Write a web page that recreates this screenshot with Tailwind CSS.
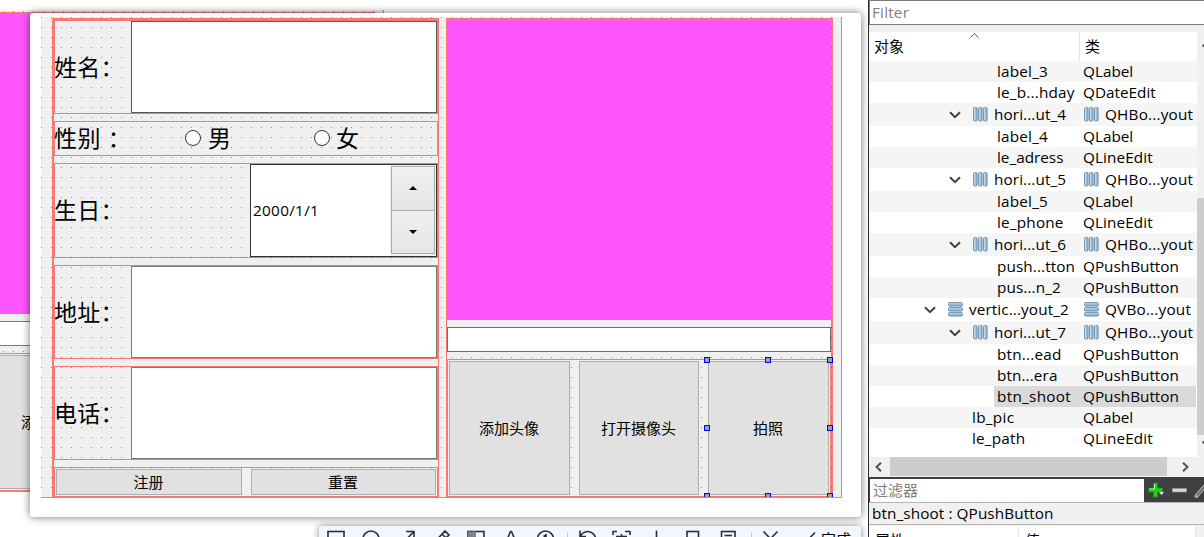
<!DOCTYPE html>
<html lang="zh-CN">
<head>
    <meta charset="UTF-8">
    <meta name="viewport" content="width=device-width, initial-scale=1.0">
    <title>Form Designer</title>
    <script src="https://cdn.jsdelivr.net/npm/@tailwindcss/browser@4"></script>
</head>
<body class="bg-white text-black font-['Open_Sans','Noto_Sans_CJK_SC',sans-serif]">
    <!-- shared icons -->
    <svg class="absolute w-0 h-0">
        <defs>
            <linearGradient id="barH" x1="0" y1="0" x2="1" y2="0">
                <stop offset="0" stop-color="#d6ecfa"/><stop offset="1" stop-color="#6fa3cc"/>
            </linearGradient>
            <linearGradient id="barV" x1="0" y1="0" x2="0" y2="1">
                <stop offset="0" stop-color="#b8e0f8"/><stop offset="1" stop-color="#6fa3cc"/>
            </linearGradient>
        </defs>
        <symbol id="hbox" viewBox="0 0 15 15">
            <g fill="url(#barH)" stroke="#8296aa" stroke-width="1">
                <rect x="0.5" y="0.5" width="3.6" height="13.5" rx="1"/>
                <rect x="5.5" y="0.5" width="3.6" height="13.5" rx="1"/>
                <rect x="10.5" y="0.5" width="3.6" height="13.5" rx="1"/>
            </g>
        </symbol>
        <symbol id="vbox" viewBox="0 0 15 15">
            <g fill="url(#barV)" stroke="#8296aa" stroke-width="1">
                <rect x="0.5" y="0.5" width="14" height="3.6" rx="1"/>
                <rect x="0.5" y="5.5" width="14" height="3.6" rx="1"/>
                <rect x="0.5" y="10.5" width="14" height="3.6" rx="1"/>
            </g>
        </symbol>
        <symbol id="chev" viewBox="0 0 12 8">
            <path d="M1 1.2 L6 6.2 L11 1.2" fill="none" stroke="#404040" stroke-width="2"/>
        </symbol>
    </svg>

    <div class="relative w-[1204px] h-[537px] overflow-hidden flex">
        <!-- designer behind the pinned window -->
        <div class="w-[868px] h-[537px] pt-[10px]">
            <div class="w-[384px] h-[482px] border-r border-b border-[#a0a0a0] bg-[#f0f0f0] bg-[radial-gradient(circle_at_3.5px_1.5px,#8c8c8c_0.6px,transparent_0.6px)] bg-[length:10px_10px] flex flex-col">
                <div class="mt-[2px] w-[375px] border-t border-[#ff0000]/50 grow flex flex-col">
                    <div class="h-[301px] bg-[#ff55ff]"></div>
                    <div class="mt-[7px] h-[25px] bg-white border-y border-[#7a7a7a]"></div>
                    <div class="mt-[7px] h-[138px] border-y border-[#ff0000]/50 bg-[#f0f0f0] py-px">
                        <div class="h-full bg-[#e1e1e1] border-y border-[#adadad] flex items-center pl-[21px] text-[15px]">添</div>
                    </div>
                </div>
            </div>
        </div>

        <!-- object inspector -->
        <div class="w-[336px] h-[537px] shrink-0 border-l border-[#2d2d2d] bg-[#f0f0f0] flex flex-col text-[15.3px] leading-none whitespace-nowrap">
            <div class="h-[25px] shrink-0 border-y border-l border-[#7a7a7a] bg-white text-[#808080] flex items-center pl-[2px] tracking-[0.2px]">Filter</div>
            <div class="mt-[7px] h-[425px] shrink-0 flex">
                <div class="w-[328px] bg-white flex flex-col">
                    <div class="h-[29px] flex items-center text-[15px]">
                        <div class="relative w-[210px] pl-[5px]">对象
                            <svg class="absolute left-[101px] -top-[6px] w-[9px] h-[5px]" viewBox="0 0 9 5"><path d="M0.5 4.5 L4.5 0.7 L8.5 4.5" fill="none" stroke="#555" stroke-width="1"/></svg>
                        </div>
                        <div class="h-full border-l border-[#e5e5e5] pl-[5px] flex items-center">类</div>
                    </div>
                    <div class="h-[21px] flex items-center bg-[#f5f5f5]"><span class="w-[214px] pl-[128px] tracking-[0.2px]">label_3</span><span>QLabel</span></div>
                    <div class="h-[21px] flex items-center"><span class="w-[214px] pl-[128px] tracking-[0.2px]">le_b...hday</span><span>QDateEdit</span></div>
                    <div class="h-[23px] flex items-center bg-[#f5f5f5]"><svg class="ml-[80px] w-3 h-2"><use href="#chev"/></svg><svg class="ml-[12px] w-[15px] h-[15px]"><use href="#hbox"/></svg><span class="w-[95px] pl-[6px] tracking-[0.1px]">hori...ut_4</span><svg class="ml-px w-[15px] h-[15px]"><use href="#hbox"/></svg><span class="pl-[6px] tracking-[0.2px]">QHBo...yout</span></div>
                    <div class="h-[21px] flex items-center"><span class="w-[214px] pl-[128px] tracking-[0.2px]">label_4</span><span>QLabel</span></div>
                    <div class="h-[21px] flex items-center bg-[#f5f5f5]"><span class="w-[214px] pl-[128px]">le_adress</span><span class="tracking-[0.1px]">QLineEdit</span></div>
                    <div class="h-[23px] flex items-center"><svg class="ml-[80px] w-3 h-2"><use href="#chev"/></svg><svg class="ml-[12px] w-[15px] h-[15px]"><use href="#hbox"/></svg><span class="w-[95px] pl-[6px] tracking-[0.1px]">hori...ut_5</span><svg class="ml-px w-[15px] h-[15px]"><use href="#hbox"/></svg><span class="pl-[6px] tracking-[0.2px]">QHBo...yout</span></div>
                    <div class="h-[21px] flex items-center bg-[#f5f5f5]"><span class="w-[214px] pl-[128px] tracking-[0.2px]">label_5</span><span>QLabel</span></div>
                    <div class="h-[21px] flex items-center"><span class="w-[214px] pl-[128px] tracking-[0.2px]">le_phone</span><span class="tracking-[0.1px]">QLineEdit</span></div>
                    <div class="h-[23px] flex items-center bg-[#f5f5f5]"><svg class="ml-[80px] w-3 h-2"><use href="#chev"/></svg><svg class="ml-[12px] w-[15px] h-[15px]"><use href="#hbox"/></svg><span class="w-[95px] pl-[6px] tracking-[0.1px]">hori...ut_6</span><svg class="ml-px w-[15px] h-[15px]"><use href="#hbox"/></svg><span class="pl-[6px] tracking-[0.2px]">QHBo...yout</span></div>
                    <div class="h-[21px] flex items-center"><span class="w-[214px] pl-[128px] tracking-[0.1px]">push...tton</span><span>QPushButton</span></div>
                    <div class="h-[21px] flex items-center bg-[#f5f5f5]"><span class="w-[214px] pl-[128px] tracking-[0.1px]">pus...n_2</span><span>QPushButton</span></div>
                    <div class="h-[23px] flex items-center"><svg class="ml-[55px] w-3 h-2"><use href="#chev"/></svg><svg class="ml-[12px] w-[15px] h-[15px]"><use href="#vbox"/></svg><span class="w-[120px] pl-[6px] tracking-[0.1px]">vertic...yout_2</span><svg class="ml-px w-[15px] h-[15px]"><use href="#vbox"/></svg><span class="pl-[6px] tracking-[0.2px]">QVBo...yout</span></div>
                    <div class="h-[23px] flex items-center bg-[#f5f5f5]"><svg class="ml-[80px] w-3 h-2"><use href="#chev"/></svg><svg class="ml-[12px] w-[15px] h-[15px]"><use href="#hbox"/></svg><span class="w-[95px] pl-[6px] tracking-[0.1px]">hori...ut_7</span><svg class="ml-px w-[15px] h-[15px]"><use href="#hbox"/></svg><span class="pl-[6px] tracking-[0.2px]">QHBo...yout</span></div>
                    <div class="h-[21px] flex items-center"><span class="w-[214px] pl-[128px] tracking-[0.2px]">btn...ead</span><span>QPushButton</span></div>
                    <div class="h-[21px] flex items-center bg-[#f5f5f5]"><span class="w-[214px] pl-[128px] tracking-[0.1px]">btn...era</span><span>QPushButton</span></div>
                    <div class="h-[21px] flex pl-[125px] pr-px"><div class="grow flex items-center bg-[#d9d9d9]"><span class="w-[89px] pl-[3px] tracking-[0.3px]">btn_shoot</span><span>QPushButton</span></div></div>
                    <div class="h-[21px] flex items-center bg-[#f5f5f5]"><span class="w-[214px] pl-[103px] tracking-[0.3px]">lb_pic</span><span>QLabel</span></div>
                    <div class="h-[21px] flex items-center"><span class="w-[214px] pl-[103px] tracking-[0.2px]">le_path</span><span class="tracking-[0.1px]">QLineEdit</span></div>
                </div>
                <div class="w-[7px] overflow-hidden flex flex-col items-start">
                    <svg class="mt-[9px] ml-[5px] w-[12px] h-[6px] shrink-0" viewBox="0 0 12 6"><path d="M0.5 5.5 L5.5 1" fill="none" stroke="#555" stroke-width="2"/></svg>
                    <div class="mt-[151px] w-full h-[237px] shrink-0 bg-[#cdcdcd]"></div>
                    <svg class="mt-[6px] ml-[5px] w-[12px] h-[6px] shrink-0" viewBox="0 0 12 6"><path d="M0.5 0.5 L5.5 5" fill="none" stroke="#555" stroke-width="2"/></svg>
                </div>
            </div>
            <div class="h-[19px] shrink-0 flex items-center">
                <svg class="ml-[6px] w-[7px] h-[10px]" viewBox="0 0 7 10"><path d="M6 0.7 L1.5 5 L6 9.3" fill="none" stroke="#555" stroke-width="2"/></svg>
                <div class="ml-[8px] w-[277px] h-full bg-[#cdcdcd]"></div>
                <svg class="ml-[15px] w-[7px] h-[10px]" viewBox="0 0 7 10"><path d="M1 0.7 L5.5 5 L1 9.3" fill="none" stroke="#555" stroke-width="2"/></svg>
            </div>
            <div class="mt-px h-[25px] shrink-0 bg-[#3f3f41] pt-[2px] pl-px flex">
                <div class="w-[274px] bg-white text-[15px] text-[#808080] flex items-center pl-[3px]">过滤器</div>
                <svg class="ml-[3px] w-[57px] h-[23px]" viewBox="0 0 57 23">
                    <path d="M6.500 4h4v5h5v4h-5v5h-4v-5h-5v-4h5z" fill="#1fd01f" stroke="#0a9a0a" stroke-width="0.8"/>
                    <path d="M7.500 5v5h-5" fill="none" stroke="#9cf79c" stroke-width="1"/>
                    <path d="M12 13h5l-2.500 3z" fill="#e8e8e8"/>
                    <rect x="25.500" y="9.500" width="14" height="3.500" fill="#d6d6d2" stroke="#9a9a9a" stroke-width="0.6"/>
                    <path d="M49.500 17L57 8" stroke="#a8a8a8" stroke-width="4" stroke-linecap="round"/>
                    <path d="M50 16.500L57 8" stroke="#66666a" stroke-width="1.500"/>
                </svg>
            </div>
            <div class="h-[23px] shrink-0 border-y border-[#b4b4b4] flex items-center pl-[3px] tracking-[0.1px]">btn_shoot : QPushButton</div>
            <div class="mt-px h-[30px] shrink-0 w-[327px] bg-white border-r border-[#e5e5e5] flex items-start text-[15px]">
                <div class="w-[150px] h-full border-r border-[#e5e5e5] pt-[7px] pl-[6px]">属性</div>
                <div class="pt-[7px] pl-[6px]">值</div>
            </div>
        </div>

        <!-- capture toolbar -->
        <div class="absolute left-[319px] top-[526px] w-[542px] h-[40px] rounded-[3px] bg-[#f2f6fe] shadow-[0_0_7px_rgba(0,0,0,0.45)] flex pt-[4px] text-[#2a2e3c]">
            <svg class="w-[35px] h-[20px]" viewBox="0 0 35 20" fill="none" stroke="currentColor" stroke-width="1.6"><rect x="9" y="1.500" width="16" height="14"/></svg>
            <svg class="w-[35px] h-[20px]" viewBox="0 0 35 20" fill="none" stroke="currentColor" stroke-width="1.6"><circle cx="17" cy="9" r="8"/></svg>
            <svg class="w-[35px] h-[20px]" viewBox="0 0 35 20" fill="none" stroke="currentColor" stroke-width="1.6"><path d="M10 17L25 1.500M17 1.500H25V9"/></svg>
            <svg class="w-[35px] h-[20px]" viewBox="0 0 35 20" fill="none" stroke="currentColor" stroke-width="1.6"><path d="M9 17l1.500-5L21 1l4 4L14 15.500zM18 4l4 4"/></svg>
            <svg class="w-[35px] h-[20px]" viewBox="0 0 35 20" fill="none" stroke="currentColor" stroke-width="1.6"><rect x="9" y="1.500" width="16" height="15"/><rect x="9" y="1.500" width="8" height="8" fill="#7f8290" stroke="none"/></svg>
            <svg class="w-[35px] h-[20px]" viewBox="0 0 35 20" fill="none" stroke="currentColor" stroke-width="1.6"><path d="M10 17L16.500 1.500H17.500L24 17"/></svg>
            <svg class="w-[35px] h-[20px]" viewBox="0 0 35 20" fill="none" stroke="currentColor" stroke-width="1.6"><circle cx="16.500" cy="9" r="8"/><path d="M14.500 6.500L17 5V13"/></svg>
            <div class="ml-[3px] mt-[2px] w-px h-[16px] bg-[#c4c8d2]"></div>
            <svg class="ml-[2px] w-[35px] h-[20px]" viewBox="0 0 35 20" fill="none" stroke="currentColor" stroke-width="1.6"><path d="M10 0.500V6.500H16M10.500 6A8 8 0 1 1 10.500 13"/></svg>
            <svg class="w-[35px] h-[20px]" viewBox="0 0 35 20" fill="none" stroke="currentColor" stroke-width="1.6"><path d="M8 5V1.500H12M20 1.500H25V5M8 12V16H12M11 6.500H22M16.500 4V7M12 6l2 2h5l2-2"/></svg>
            <svg class="w-[35px] h-[20px]" viewBox="0 0 35 20" fill="none" stroke="currentColor" stroke-width="1.6"><path d="M16.500 0.500V13M11 8L16.500 13.500L22 8"/></svg>
            <svg class="w-[35px] h-[20px]" viewBox="0 0 35 20" fill="none" stroke="currentColor" stroke-width="1.6"><rect x="12" y="1.500" width="11.500" height="15"/></svg>
            <svg class="w-[35px] h-[20px]" viewBox="0 0 35 20" fill="none" stroke="currentColor" stroke-width="1.6"><rect x="11.500" y="1.500" width="13.500" height="15"/><path d="M14.500 5.500H22"/></svg>
            <div class="ml-[6px] mt-[2px] w-px h-[16px] bg-[#c4c8d2]"></div>
            <svg class="ml-px w-[35px] h-[20px]" viewBox="0 0 35 20" fill="none" stroke="currentColor" stroke-width="1.6"><path d="M10.500 1.500L24.500 16M24.500 1.500L10.500 16"/></svg>
            <svg class="w-[33px] h-[20px]" viewBox="0 0 33 20" fill="none" stroke="currentColor" stroke-width="1.6"><path d="M10 10L15 15L27 2.500"/></svg>
            <span class="text-[15px] leading-[18px] text-black whitespace-nowrap">完成</span>
        </div>

        <!-- pinned window with the form -->
        <div class="absolute left-[30px] top-[13px] w-[831px] h-[504px] rounded-[3px] bg-white shadow-[0_0_8px_rgba(0,0,0,0.55)] pl-[11px] pt-[4px]">
            <div class="relative w-[801px] h-[481px] overflow-hidden border-r border-b border-[#a0a0a0] bg-[#f0f0f0] bg-[radial-gradient(circle_at_0.5px_0.5px,#8c8c8c_0.6px,transparent_0.6px)] bg-[length:10px_10px] flex gap-[7px] pt-px pl-[11px] text-[23px] leading-none">

                <div class="w-[387px] h-[479px] border-t-2 border-l-2 border-r border-[#ff0000]/50 flex flex-col gap-[7px]">
                    <div class="h-[94px] border border-[#ff0000]/50 flex items-center">
                        <span class="-ml-px w-[77px] whitespace-nowrap tracking-[0.3px]">姓名：</span>
                        <div class="w-[306px] h-full bg-white border border-[#5a5a5a]"></div>
                    </div>
                    <div class="h-[35px] border border-[#ff0000]/50 flex items-center">
                        <span class="-ml-px w-[131px] whitespace-nowrap tracking-[0.6px]">性别 ：</span>
                        <span class="mb-[2px] w-4 h-4 rounded-full border border-[#333] bg-white"></span>
                        <span class="w-[106px] pl-[7px]">男</span>
                        <span class="mb-[2px] ml-[7px] w-4 h-4 rounded-full border border-[#333] bg-white"></span>
                        <span class="pl-[6px]">女</span>
                    </div>
                    <div class="h-[95px] border border-[#ff0000]/50 flex items-center">
                        <span class="-ml-px w-[196px] whitespace-nowrap tracking-[0.3px]">生日：</span>
                        <div class="w-[187px] h-full bg-white border border-[#333] flex items-center text-[15.3px] tracking-[0.3px]">
                            <span class="w-[139px] pl-[2px]">2000/1/1</span>
                            <div class="w-[46px] h-full bg-[#f0f0f0] pt-px pl-px pr-px pb-[2px]">
                                <div class="h-full border border-[#adadad] flex flex-col">
                                    <div class="h-[44px] border-b border-[#adadad] bg-linear-to-b from-[#f0f0f0] to-[#e5e5e5] flex items-center justify-center">
                                        <svg class="mb-[2px] w-[8px] h-[4px]" viewBox="0 0 8 4"><path d="M0 4L4 0L8 4z"/></svg>
                                    </div>
                                    <div class="grow bg-linear-to-b from-[#f0f0f0] to-[#e5e5e5] flex items-center justify-center">
                                        <svg class="w-[8px] h-[4px]" viewBox="0 0 8 4"><path d="M0 0L4 4L8 0z"/></svg>
                                    </div>
                                </div>
                            </div>
                        </div>
                    </div>
                    <div class="h-[94px] border border-[#ff0000]/50 flex items-center">
                        <span class="-ml-px w-[77px] whitespace-nowrap tracking-[0.3px]">地址：</span>
                        <div class="w-[306px] h-full bg-white border border-[#7a7a7a]"></div>
                    </div>
                    <div class="h-[94px] border border-[#ff0000]/50 flex items-center">
                        <span class="-ml-px w-[77px] whitespace-nowrap tracking-[0.3px]">电话：</span>
                        <div class="w-[306px] h-full bg-white border border-[#7a7a7a]"></div>
                    </div>
                    <div class="h-[30px] border border-[#ff0000]/50 flex gap-[9px] p-px text-[15px]">
                        <div class="w-[186px] bg-[#e1e1e1] border border-[#adadad] flex items-center justify-center pr-px">注册</div>
                        <div class="w-[185px] bg-[#e1e1e1] border border-[#adadad] flex items-center justify-center pr-px">重置</div>
                    </div>
                </div>

                <div class="w-[387px] h-[479px] border-t-2 border-l border-r-2 border-[#ff0000]/50 flex flex-col text-[15px]">
                    <div class="h-[300px] bg-[#ff55ff]"></div>
                    <div class="mt-[7px] h-[25px] bg-white border border-[#6e6e6e]"></div>
                    <div class="mt-[7px] h-[138px] border border-[#ff0000]/50 p-px flex gap-[9px]">
                        <div class="w-[121px] bg-[#e1e1e1] border border-[#adadad] flex items-center justify-center pr-px">添加头像</div>
                        <div class="w-[120px] bg-[#e1e1e1] border border-[#adadad] flex items-center justify-center pr-px">打开摄像头</div>
                        <div class="w-[121px] bg-[#e1e1e1] border border-[#adadad] flex items-center justify-center pr-px">拍照</div>
                    </div>
                </div>

                <!-- selection handles -->
                <i class="absolute left-[663px] top-[340px] size-[6px] bg-[#a0a0a0] border border-[#0000ff]"></i>
                <i class="absolute left-[724px] top-[340px] size-[6px] bg-[#a0a0a0] border border-[#0000ff]"></i>
                <i class="absolute left-[786px] top-[340px] size-[6px] bg-[#a0a0a0] border border-[#0000ff]"></i>
                <i class="absolute left-[663px] top-[408px] size-[6px] bg-[#a0a0a0] border border-[#0000ff]"></i>
                <i class="absolute left-[786px] top-[408px] size-[6px] bg-[#a0a0a0] border border-[#0000ff]"></i>
                <i class="absolute left-[663px] top-[476px] size-[6px] bg-[#a0a0a0] border border-[#0000ff]"></i>
                <i class="absolute left-[724px] top-[476px] size-[6px] bg-[#a0a0a0] border border-[#0000ff]"></i>
                <i class="absolute left-[786px] top-[476px] size-[6px] bg-[#a0a0a0] border border-[#0000ff]"></i>
            </div>
        </div>
    </div>
</body>
</html>
